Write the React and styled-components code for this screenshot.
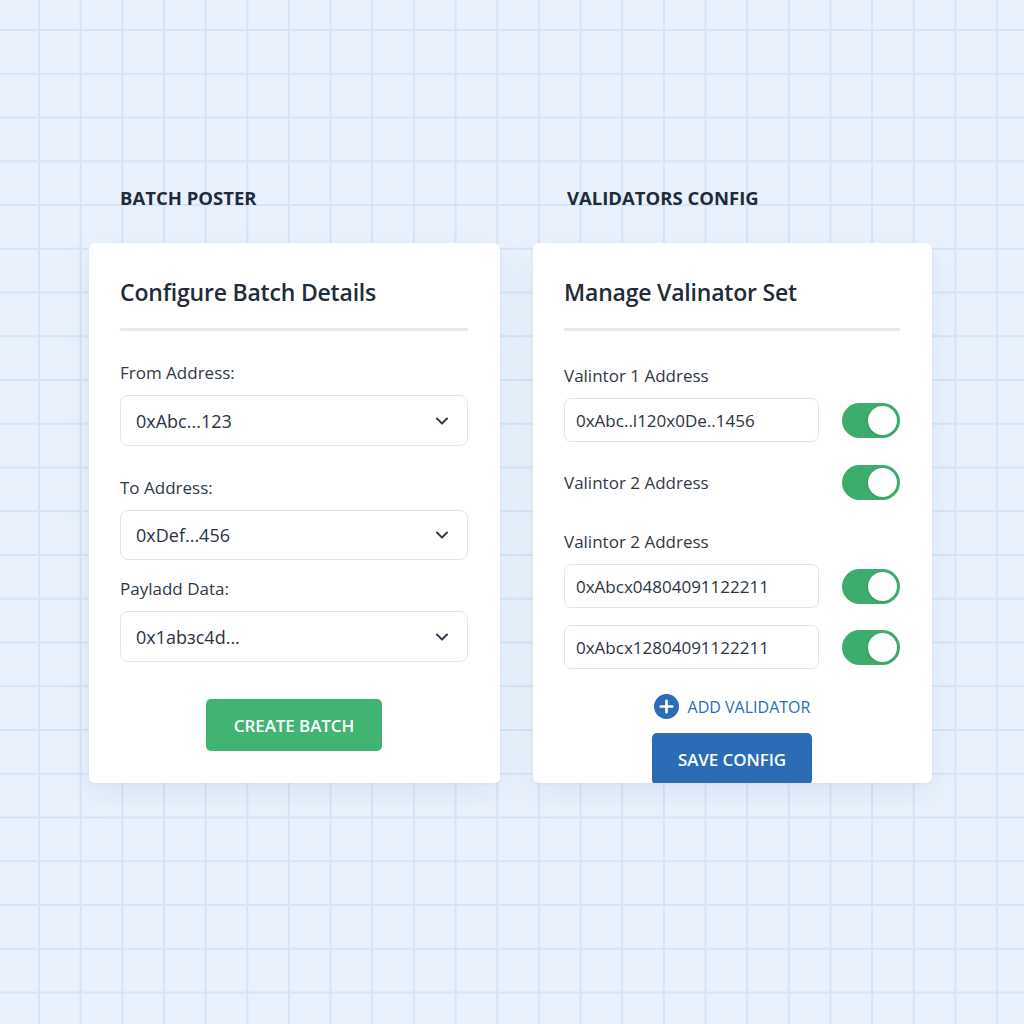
import styled, { createGlobalStyle } from 'styled-components';
import { ChevronDown } from 'lucide-react';

const GlobalStyle = createGlobalStyle`
  html, body {
    margin: 0;
    padding: 0;
  }

  body {
    min-height: 1024px;
    font-family: "Open Sans", "Noto Sans", sans-serif;
    color: #26303d;
    background-color: #e9f2fc;
    background-image:
      linear-gradient(to right, #d5e4f6 2px, transparent 2px),
      linear-gradient(to bottom, #d5e4f6 2px, transparent 2px);
    background-size: 41.67px 43.75px;
    background-position: 38px 29px;
  }
`;

const fromFields = [
  { label: 'From Address:', value: '0xAbc...123', gap: 30 },
  { label: 'To Address:', value: '0xDef...456', gap: 30 },
  { label: 'Payladd Data:', value: '0x1abзc4d...', gap: 17 },
];

function Toggle({ on = true }) {
  return (
    <Switch $on={on}>
      <Knob />
    </Switch>
  );
}

function AddIcon() {
  return (
    <svg width="25" height="25" viewBox="0 0 24 24">
      <circle cx="12" cy="12" r="12" fill="#2a6cb8" />
      <path d="M12 6.5v11M6.5 12h11" stroke="#fff" strokeWidth="2.6" strokeLinecap="round" />
    </svg>
  );
}

export default function App() {
  return (
    <>
      <GlobalStyle />
      <Page>
        <Column $width={411}>
          <SectionTitle>BATCH POSTER</SectionTitle>
          <Card>
            <CardTitle>Configure Batch Details</CardTitle>
            <Divider />
            {fromFields.map((f, i) => (
              <Field key={f.label} $gap={f.gap}>
                <Label>{f.label}</Label>
                <Select $height={i === 1 ? 50 : 51}>
                  <span>{f.value}</span>
                  <ChevronDown size={20} strokeWidth={2.3} />
                </Select>
              </Field>
            ))}
            <ButtonRow $gap={37}>
              <PrimaryButton $width={176}>CREATE BATCH</PrimaryButton>
            </ButtonRow>
          </Card>
        </Column>

        <Column $width={399}>
          <SectionTitle $indent={34}>VALIDATORS CONFIG</SectionTitle>
          <Card>
            <CardTitle>Manage Valinator Set</CardTitle>
            <Divider />

            <Field $gap={33}>
              <Label>Valintor 1 Address</Label>
              <ValidatorRow>
                <AddressInput>0xAbc..l120x0De..1456</AddressInput>
                <Toggle />
              </ValidatorRow>
            </Field>

            <LabelRow $gap={23}>
              <Label>Valintor 2 Address</Label>
              <Toggle />
            </LabelRow>

            <Field $gap={30}>
              <Label>Valintor 2 Address</Label>
              <ValidatorRow>
                <AddressInput>0xAbcx04804091122211</AddressInput>
                <Toggle />
              </ValidatorRow>
            </Field>

            <ValidatorRow $gap={17}>
              <AddressInput>0xAbcx12804091122211</AddressInput>
              <Toggle />
            </ValidatorRow>

            <AddLink>
              <AddIcon />
              ADD VALIDATOR
            </AddLink>

            <ButtonRow $gap={14}>
              <PrimaryButton $width={160} $color="#2b6cb6">SAVE CONFIG</PrimaryButton>
            </ButtonRow>
          </Card>
        </Column>
      </Page>
    </>
  );
}

const Page = styled.main`
  display: flex;
  align-items: flex-start;
  gap: 33px;
  padding: 186px 0 0 89px;
`;

const Column = styled.section`
  width: ${(p) => p.$width}px;
  display: flex;
  flex-direction: column;
`;

const SectionTitle = styled.h2`
  margin: 0 0 33px;
  padding-left: ${(p) => p.$indent || 31}px;
  font-size: 18.5px;
  line-height: 24px;
  font-weight: 700;
  color: #1f2b3a;
`;

const Card = styled.div`
  height: 540px;
  box-sizing: border-box;
  padding: 34px 32px 0 31px;
  background: #fff;
  border-radius: 6px;
  overflow: hidden;
  box-shadow: 0 10px 30px rgba(40, 80, 130, 0.08), 0 1px 3px rgba(40, 80, 130, 0.06);
`;

const CardTitle = styled.h3`
  margin: 0;
  font-size: 23px;
  line-height: 30px;
  font-weight: 600;
  color: #222c39;
  letter-spacing: -0.2px;
`;

const Divider = styled.div`
  height: 3px;
  margin-top: 21px;
  background: #e4eaf1;
  border-radius: 2px;
`;

const Field = styled.div`
  display: flex;
  flex-direction: column;
  gap: 10px;
  margin-top: ${(p) => p.$gap}px;
`;

const Label = styled.label`
  font-size: 17px;
  line-height: 24px;
  color: #2f3946;
`;

const Select = styled.div`
  height: ${(p) => p.$height}px;
  box-sizing: border-box;
  display: flex;
  align-items: center;
  justify-content: space-between;
  padding: 0 15px 0 15px;
  border: 1.5px solid #dce5f0;
  border-radius: 8px;
  font-size: 18px;
  color: #2b3442;

  svg {
    color: #2d3a4a;
  }
`;

const ValidatorRow = styled.div`
  display: flex;
  align-items: center;
  gap: 23px;
  margin-top: ${(p) => p.$gap || 0}px;
`;

const LabelRow = styled.div`
  display: flex;
  align-items: center;
  justify-content: space-between;
  margin-top: ${(p) => p.$gap}px;
`;

const AddressInput = styled.div`
  flex: 1;
  height: 44px;
  box-sizing: border-box;
  display: flex;
  align-items: center;
  padding: 0 11px;
  border: 1.5px solid #dce5f0;
  border-radius: 7px;
  font-size: 17px;
  color: #2b3442;
`;

const Switch = styled.div`
  flex: none;
  width: 58px;
  height: 35px;
  box-sizing: border-box;
  padding: 3px;
  display: flex;
  justify-content: ${(p) => (p.$on ? 'flex-end' : 'flex-start')};
  align-items: center;
  border-radius: 18px;
  background: ${(p) => (p.$on ? '#3dad6d' : '#cfd8e3')};
`;

const Knob = styled.div`
  width: 29px;
  height: 29px;
  border-radius: 50%;
  background: #fff;
  box-shadow: -1px 1px 3px rgba(0, 0, 0, 0.12);
`;

const AddLink = styled.div`
  margin-top: 25px;
  display: flex;
  justify-content: center;
  align-items: center;
  gap: 9px;
  font-size: 16px;
  line-height: 24px;
  font-weight: 500;
  color: #2a6cb8;
`;

const ButtonRow = styled.div`
  display: flex;
  justify-content: center;
  margin-top: ${(p) => p.$gap}px;
`;

const PrimaryButton = styled.button`
  width: ${(p) => p.$width}px;
  height: 52px;
  border: none;
  border-radius: 5px;
  background: ${(p) => p.$color || '#41b373'};
  color: #fff;
  font-family: inherit;
  font-size: 17px;
  font-weight: 600;
  letter-spacing: -0.1px;
  cursor: pointer;
`;
